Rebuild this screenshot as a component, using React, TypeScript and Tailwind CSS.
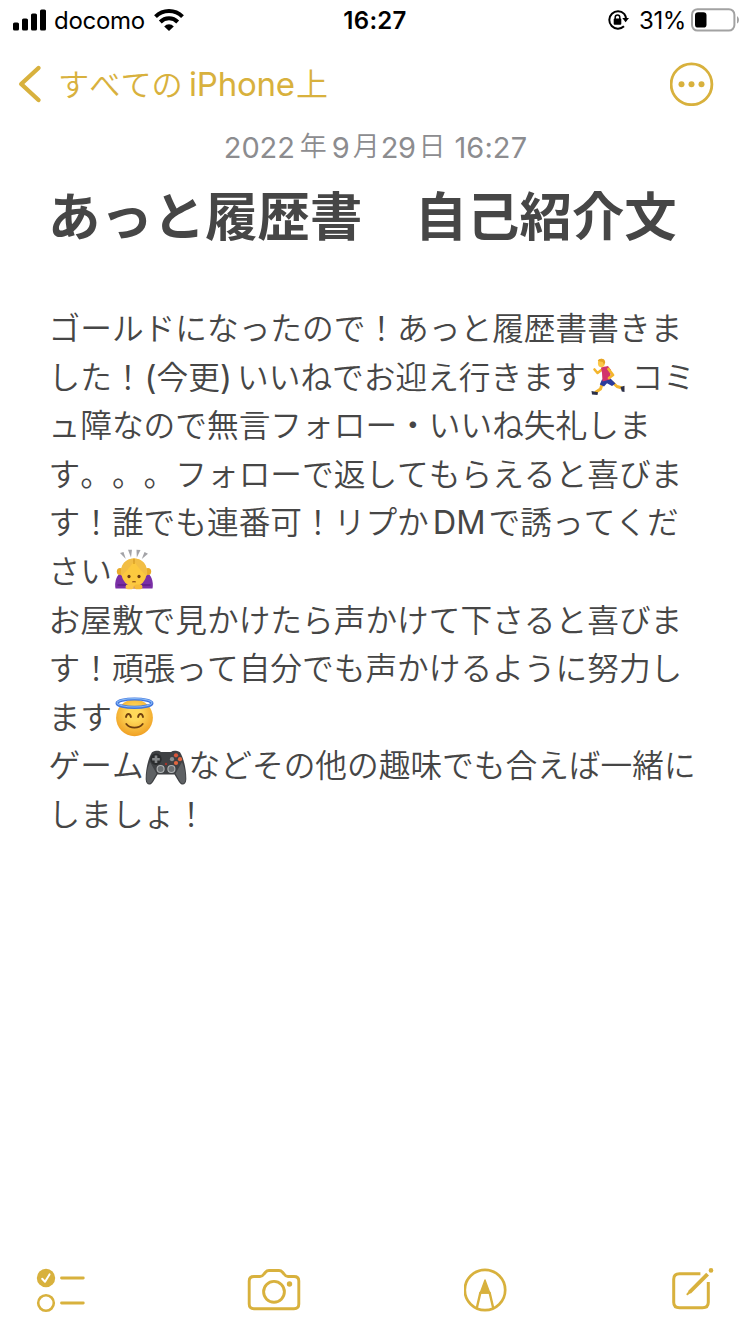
import type { ReactNode } from "react";

function StatusBar() {
	return (
		<header className="flex h-10 items-center text-black">
			<div className="flex flex-1 items-center pl-[13px]">
				<svg width="34" height="22" viewBox="0 0 34 22" fill="currentColor">
					<rect x="0" y="13.5" width="6" height="8" rx="1.6" />
					<rect x="9" y="9.5" width="6" height="12" rx="1.6" />
					<rect x="18" y="4.5" width="6" height="17" rx="1.6" />
					<rect x="27" y="0.5" width="6" height="21" rx="1.6" />
				</svg>
				<span className="mt-[2px] ml-[7px] w-[91px] text-[24px] tracking-[-0.3px] whitespace-nowrap">
					docomo
				</span>
				<svg
					className="ml-[9px]"
					width="30"
					height="22"
					viewBox="0 0 30 22"
					fill="none"
					stroke="currentColor"
					strokeWidth="4"
				>
					<path d="M1.5 7.6A19.3 19.3 0 0 1 28.5 7.6" />
					<path d="M6.3 13A12.2 12.2 0 0 1 23.7 13" />
					<path
						d="M10.2 17.4A6.5 6.5 0 0 1 19.8 17.4L15 22Z"
						fill="currentColor"
						stroke="none"
					/>
				</svg>
			</div>
			<time className="mt-[2px] mr-[3px] text-[24px] font-semibold tracking-[0.3px]">
				16:27
			</time>
			<div className="flex flex-1 items-center justify-end pr-[10px]">
				<svg width="22" height="22" viewBox="0 0 22 22" fill="none">
					<path
						d="M16.2 4.9A8.7 8.7 0 1 0 16 17.3M16.2 4.9A8.7 8.7 0 0 1 18 9.6"
						stroke="currentColor"
						strokeWidth="2"
					/>
					<path d="M14.3 9H21L17.6 13.3Z" fill="currentColor" />
					<rect x="5.7" y="9.6" width="7.6" height="6.2" rx="1" fill="currentColor" />
					<path
						d="M7.2 10V8.2A2.3 2.3 0 0 1 11.8 8.2V10"
						stroke="currentColor"
						strokeWidth="1.5"
					/>
				</svg>
				<span className="mt-[2px] ml-[9px] w-[47px] text-[24px] tracking-[-0.4px] whitespace-nowrap">
					31%
				</span>
				<svg className="ml-[5px]" width="49" height="24" viewBox="0 0 49 24">
					<rect
						x="1"
						y="1.2"
						width="42.4"
						height="21.4"
						rx="5.5"
						fill="none"
						stroke="#a2a2a2"
						strokeWidth="2"
					/>
					<rect x="4" y="4.2" width="11.5" height="15.4" rx="3.2" fill="#000" />
					<path d="M46 8.2C48.6 9.3 48.6 14.5 46 15.6Z" fill="#a2a2a2" />
				</svg>
			</div>
		</header>
	);
}

function NavBar() {
	return (
		<nav className="flex h-[88px] items-center pr-[36px] pl-[18px] text-[#d8b13d]">
			<svg
				width="24"
				height="40"
				viewBox="0 0 24 40"
				fill="none"
				stroke="currentColor"
				strokeWidth="4.4"
				strokeLinecap="round"
				strokeLinejoin="round"
			>
				<path d="M20.5 4L3.2 20L20.5 36" />
			</svg>
			<span className="mt-[2px] ml-[16px] flex items-baseline whitespace-nowrap">
				<span className="w-[131px] text-[31.2px] font-[350] [font-kerning:none]">すべての</span>
				<span className="w-[107px] text-[33px] tracking-[-0.2px]">iPhone</span>
				<span className="text-[32px] font-[350]">上</span>
			</span>
			<svg
				className="ml-auto"
				width="44"
				height="44"
				viewBox="0 0 44 44"
				fill="currentColor"
			>
				<circle cx="21.5" cy="22.3" r="20.4" fill="none" stroke="currentColor" strokeWidth="2.8" />
				<circle cx="11.5" cy="22.3" r="3" />
				<circle cx="21.5" cy="22.3" r="3" />
				<circle cx="31.5" cy="22.3" r="3" />
			</svg>
		</nav>
	);
}

function Runner() {
	return (
		<svg className="mr-[4px] ml-[4px] shrink-0" width="38" height="38" viewBox="0 0 38 38">
			<g fill="none" strokeLinecap="round" strokeLinejoin="round">
				<path d="M14 10L7.5 15L4.5 11.5" stroke="#f3b52d" strokeWidth="2.6" />
				<path d="M12.5 25L10.5 31L6 34" stroke="#f3b52d" strokeWidth="3" />
				<path d="M22 24L27 28.5L32 30" stroke="#f3b52d" strokeWidth="3" />
			</g>
			<path d="M1.5 33L8 34.2L7.5 37L2 36.4Z" fill="#2c3048" />
			<path d="M30.5 29L34.5 27.8L34.5 34L31.8 33.6Z" fill="#2c3048" />
			<path d="M12 21.5L20.5 20.5L25.5 25.5L22 28L17 25.3L14 28.5L9.8 26.5Z" fill="#2b3c9c" />
			<path d="M11 9.5L18 8L21 12L20 21.5L12.5 23.5L12 15Z" fill="#d2336c" />
			<path
				d="M18.5 11L23 17L19 20"
				fill="none"
				stroke="#f3b52d"
				strokeWidth="2.8"
				strokeLinecap="round"
				strokeLinejoin="round"
			/>
			<ellipse cx="11.3" cy="5" rx="3.4" ry="4.3" fill="#fbc74a" />
			<path d="M7.8 3C8.5 -0.3 15.5 -0.4 15.2 4.5L14 7L12.8 4Z" fill="#e6a424" />
		</svg>
	);
}

function Bowing() {
	return (
		<svg className="mb-[3px] ml-[2px] shrink-0" width="40" height="42" viewBox="0 0 40 42">
			<g fill="#a3a3a7">
				<path d="M6 4L9.5 3L11.8 10Z" />
				<path d="M14 0.8L18 0.8L17 8.5Z" />
				<path d="M22.5 0.8L26.5 1L22.8 8.5Z" />
				<path d="M30.5 3L34 4.8L27.8 10Z" />
			</g>
			<path
				d="M6 24C1.5 28 0.5 35 1.5 39.5H38.5C39.5 35 38.5 28 34 24Z"
				fill="#7a2fa6"
			/>
			<path d="M3.5 36H36.5" stroke="#5d2086" strokeWidth="1.5" />
			<ellipse cx="6" cy="22.5" rx="3.2" ry="3.6" fill="#e9ab2a" />
			<ellipse cx="34" cy="22.5" rx="3.2" ry="3.6" fill="#e9ab2a" />
			<ellipse cx="20" cy="23.5" rx="12.6" ry="14" fill="#fcc93f" />
			<path
				d="M7 27C5.4 15 12 9.4 20 9.4S34.6 15 33 27C30.5 25 24 19 20 12C16 19 9.5 25 7 27Z"
				fill="#f2be45"
			/>
			<path d="M20 9.6V15" stroke="#c98d1c" strokeWidth="1" />
			<ellipse cx="15" cy="27.5" rx="1.6" ry="1.8" fill="#6b3b10" />
			<ellipse cx="25" cy="27.5" rx="1.6" ry="1.8" fill="#6b3b10" />
			<path
				d="M18.2 33Q20 32.2 21.8 33"
				fill="none"
				stroke="#8a4b12"
				strokeWidth="1.2"
			/>
			<rect x="11.5" y="35.6" width="8.5" height="4.6" rx="2.3" fill="#fbc74a" />
			<rect x="20" y="35.6" width="8.5" height="4.6" rx="2.3" fill="#f5bb38" />
		</svg>
	);
}

function Halo() {
	return (
		<svg className="mb-[2px] ml-[2px] shrink-0" width="40" height="40" viewBox="0 0 40 40">
			<defs>
				<radialGradient id="face" cx="50%" cy="40%" r="60%">
					<stop offset="0.3" stopColor="#ffd95a" />
					<stop offset="1" stopColor="#f0a024" />
				</radialGradient>
			</defs>
			<circle cx="20.5" cy="20.8" r="18.4" fill="url(#face)" />
			<ellipse
				cx="20.5"
				cy="6.2"
				rx="17.4"
				ry="4.2"
				fill="none"
				stroke="#3f74dc"
				strokeWidth="3.2"
			/>
			<ellipse
				cx="20.5"
				cy="5.8"
				rx="17.4"
				ry="4.2"
				fill="none"
				stroke="#86b8f6"
				strokeWidth="1.2"
			/>
			<g fill="none" stroke="#70400f" strokeWidth="1.9" strokeLinecap="round">
				<path d="M12 20C12.7 16 16.1 16 16.9 20" />
				<path d="M24.1 20C24.9 16 28.3 16 29 20" />
				<path d="M12.3 27C16 31.8 25 31.8 28.7 27" />
			</g>
		</svg>
	);
}

function Gamepad() {
	return (
		<svg className="mt-[3px] mr-[2px] ml-px shrink-0" width="42" height="36" viewBox="0 0 42 36">
			<path
				d="M7 2.2C11 0.2 14 0.4 16 2H26C28 0.4 31 0.2 35 2.2C38.5 7 41.5 20 41.3 29.5C41 35.5 36.5 36 34 32L29.5 24.5H12.5L8 32C5.5 36 1 35.5 0.7 29.5C0.5 20 3.5 7 7 2.2Z"
				fill="#3f4144"
			/>
			<path
				d="M5 12C2 19 1.2 25 1.6 30C2.3 34.6 5.5 34.2 7.2 31L11.5 23.5ZM37 12C40 19 40.8 25 40.4 30C39.7 34.6 36.5 34.2 34.8 31L30.5 23.5Z"
				fill="#5e6164"
			/>
			<circle cx="11" cy="9.2" r="5.7" fill="#2a2c2e" />
			<path d="M11 5.4V13M7.2 9.2H14.8" stroke="#85888a" strokeWidth="2.6" />
			<circle cx="31" cy="5.3" r="2.1" fill="#d9563b" />
			<circle cx="27" cy="9.2" r="2.1" fill="#8d8f91" />
			<circle cx="35" cy="9.2" r="2.1" fill="#e4673f" />
			<circle cx="31" cy="13" r="2.1" fill="#e4673f" />
			<circle cx="21" cy="14" r="1.2" fill="#a5352b" />
			<g fill="#6c7073" stroke="#b0b3b5" strokeWidth="1.1">
				<circle cx="15.6" cy="19" r="3.5" />
				<circle cx="26.4" cy="19" r="3.5" />
			</g>
		</svg>
	);
}

function Line({ children }: { children: ReactNode }) {
	return <p className="flex h-[48.6px] items-center whitespace-nowrap">{children}</p>;
}

function Note() {
	return (
		<main className="h-[1120px] text-[#464646]">
			<p className="flex h-[39px] items-center justify-center pl-px text-[29px] whitespace-nowrap text-[#8c8c8f]">
				<span className="mr-[5px] tracking-[-0.1px]">2022</span>
				<span className="mr-[5px] text-[27px] font-[350]">年</span>
				<span className="mr-[3px]">9</span>
				<span className="mr-px text-[27px] font-[350]">月</span>
				<span className="mr-[3px] tracking-[-0.5px]">29</span>
				<span className="mr-[9px] text-[27px] font-[350]">日</span>
				<span className="tracking-[0.1px]">16:27</span>
			</p>
			<h1 className="mt-[11px] pl-[48px] text-[52.4px] leading-[78px] font-bold whitespace-nowrap">
				あっと履歴書　自己紹介文
			</h1>
			<div className="mt-[48.5px] pl-[48.5px] text-[31.7px] font-[350] [font-kerning:none] [text-spacing-trim:space-all]">
				<Line>ゴールドになったので！あっと履歴書書きま</Line>
				<Line>
					した！
					<span className="ml-px text-[33px] font-normal">(</span>
					今更
					<span className="mr-[5px] text-[33px] font-normal">)</span>
					いいねでお迎え行きます
					<Runner />
					コミ
				</Line>
				<Line>ュ障なので無言フォロー・いいね失礼しま</Line>
				<Line>す。。。フォローで返してもらえると喜びま</Line>
				<Line>
					す！誰でも連番可！リプか
					<span className="mr-[3px] ml-[4px] text-[32.5px] font-normal">DM</span>
					で誘ってくだ
				</Line>
				<Line>
					さい
					<Bowing />
				</Line>
				<Line>お屋敷で見かけたら声かけて下さると喜びま</Line>
				<Line>す！頑張って自分でも声かけるように努力し</Line>
				<Line>
					ます
					<Halo />
				</Line>
				<Line>
					ゲーム
					<Gamepad />
					などその他の趣味でも合えば一緒に
				</Line>
				<Line>しましょ！</Line>
			</div>
		</main>
	);
}

function Toolbar() {
	return (
		<footer className="flex h-[84px] items-center justify-between pr-[36px] pl-[35px] text-[#d8b13d]">
			<svg width="50" height="46" viewBox="0 0 50 46" fill="none" stroke="currentColor">
				<circle cx="11" cy="11" r="9.2" fill="currentColor" stroke="none" />
				<path
					d="M7.2 11.7L10 14.7L14.5 7.4"
					stroke="#fff"
					strokeWidth="2"
					strokeLinecap="round"
					strokeLinejoin="round"
				/>
				<circle cx="11" cy="36" r="7.8" strokeWidth="2.6" />
				<path d="M26.5 11H48.3M26.5 36H48.3" strokeWidth="2.8" strokeLinecap="round" />
			</svg>
			<svg
				width="54"
				height="44"
				viewBox="0 0 54 44"
				fill="none"
				stroke="currentColor"
				strokeWidth="2.9"
				strokeLinejoin="round"
			>
				<path d="M7 8.5H13C15 8.5 16 7.5 17 6L18.5 4.2C19.5 3 20.5 2.5 22 2.5H32C33.5 2.5 34.5 3 35.5 4.2L37 6C38 7.5 39 8.5 41 8.5H47C50 8.5 51.8 10.2 51.8 13V36C51.8 39 50 40.7 47 40.7H7C4 40.7 2.2 39 2.2 36V13C2.2 10.2 4 8.5 7 8.5Z" />
				<circle cx="27" cy="23.8" r="10.4" />
				<circle cx="42.5" cy="16" r="2.7" fill="currentColor" stroke="none" />
			</svg>
			<svg
				width="44"
				height="44"
				viewBox="0 0 44 44"
				fill="none"
				stroke="currentColor"
				strokeWidth="2.7"
			>
				<circle cx="21" cy="22" r="20.2" />
				<path d="M12.8 40L16.4 24.6H25.6L29.2 40" strokeWidth="2.4" strokeLinejoin="round" />
				<path
					d="M21 12L25.8 25H16.2Z"
					fill="currentColor"
					strokeWidth="1.4"
					strokeLinejoin="round"
				/>
			</svg>
			<svg
				width="44"
				height="44"
				viewBox="0 0 44 44"
				fill="none"
				stroke="currentColor"
				strokeWidth="3"
			>
				<path d="M30.4 5.7H9.5C5.8 5.7 3.7 7.6 3.7 11.2V34.2C3.7 37.8 5.8 39.7 9.5 39.7H32.5C36.2 39.7 38.3 37.8 38.3 34.2V14" />
				<path d="M17.2 26.2L18.6 22.6L36.2 4.8L39 7.6L21.2 25.2Z" fill="currentColor" stroke="none" />
				<path d="M17.4 26.2L20 23.6" strokeWidth="2" strokeLinecap="round" />
				<circle cx="41" cy="2.4" r="2.3" fill="currentColor" stroke="none" />
			</svg>
		</footer>
	);
}

export default function App() {
	return (
		<div className="h-[1334px] w-[750px] overflow-hidden bg-white font-[Inter,'Noto_Sans_CJK_JP',sans-serif]">
			<StatusBar />
			<NavBar />
			<Note />
			<Toolbar />
		</div>
	);
}
